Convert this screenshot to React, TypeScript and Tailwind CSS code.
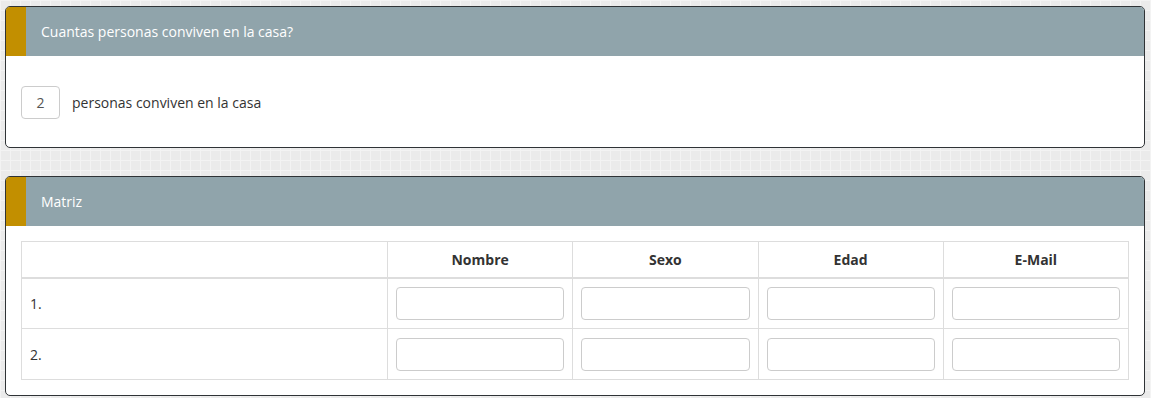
// Encuesta: panel de convivientes y matriz de datos.

import React from 'react';

const COLUMNS = ['Nombre', 'Sexo', 'Edad', 'E-Mail'];
const ROWS = ['1.', '2.'];

export default function App() {
  return (
    <div
      className="min-h-[398px] w-[1151px] pl-[5px] pr-[6px] pt-[6px] pb-[2px] flex flex-col gap-[28px] bg-[#ebebeb] bg-[linear-gradient(#f3f3f3_1px,transparent_1px),linear-gradient(90deg,#f3f3f3_1px,transparent_1px)] bg-[size:10px_10px] text-[14px] text-[#333]"
      style={{ fontFamily: '"Open Sans", "Liberation Sans", sans-serif' }}
    >
      {/* Pregunta numérica */}
      <Panel title="Cuantas personas conviven en la casa?">
        <div className="flex items-center gap-3 px-[15px] pt-[30px] pb-[28px]">
          <input
            type="text"
            defaultValue="2"
            className="w-[39px] h-[33px] text-center border border-[#ccc] rounded-[4px] text-[14px] text-[#555] outline-none"
          />
          <span>personas conviven en la casa</span>
        </div>
      </Panel>

      {/* Matriz */}
      <Panel title="Matriz">
        <div className="px-[15px] pt-[15px] pb-[15px]">
          <table className="w-full border-collapse table-fixed">
            <colgroup>
              <col className="w-[366px]" />
              {COLUMNS.map(c => <col key={c} />)}
            </colgroup>
            <thead>
              <tr className="h-[36px]">
                <th className="border border-[#ddd] border-b-2" />
                {COLUMNS.map(c => (
                  <th key={c} className="border border-[#ddd] border-b-2 font-bold text-center text-[#333]">{c}</th>
                ))}
              </tr>
            </thead>
            <tbody>
              {ROWS.map(r => (
                <tr key={r} className="h-[51px]">
                  <td className="border border-[#ddd] px-2 text-left text-[#333]">{r}</td>
                  {COLUMNS.map(c => (
                    <td key={c} className="border border-[#ddd] px-2">
                      <input
                        type="text"
                        className="block w-full h-[33px] border border-[#ccc] rounded-[4px] outline-none"
                      />
                    </td>
                  ))}
                </tr>
              ))}
            </tbody>
          </table>
        </div>
      </Panel>
    </div>
  );
}

// ── Helpers ───────────────────────────────────────────────────────────────────

function Panel({ title, children }: { title: string; children: React.ReactNode }) {
  return (
    <div className="bg-white border border-[#2f3336] rounded-[5px] overflow-hidden">
      <div className="flex h-[49px] bg-[#90a4ab]">
        <div className="w-[20px] bg-[#c28f00]" />
        <div className="flex items-center pl-[15px] text-white">{title}</div>
      </div>
      {children}
    </div>
  );
}
